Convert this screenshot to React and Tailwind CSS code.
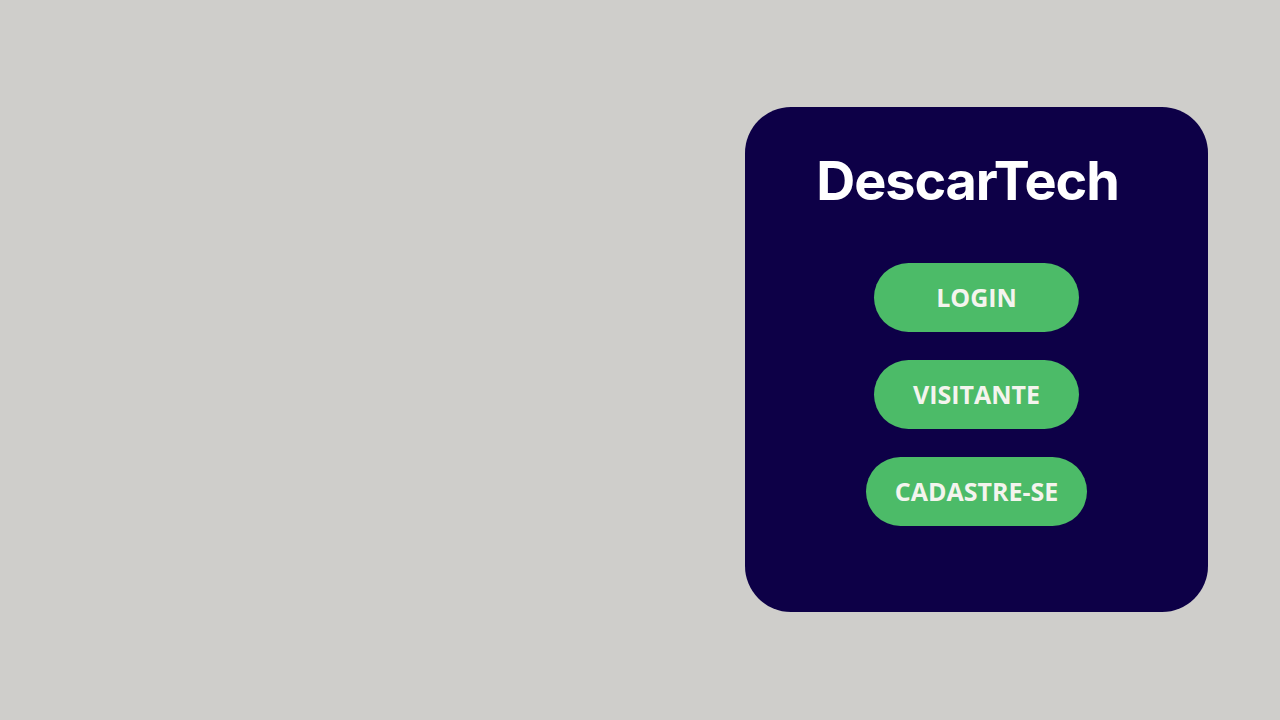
export default function App() {
  const buttons = [
    { label: 'LOGIN', w: 'w-[205px]' },
    { label: 'VISITANTE', w: 'w-[205px]' },
    { label: 'CADASTRE-SE', w: 'w-[221px]' },
  ];

  return (
    <div className="w-[1280px] h-[720px] bg-[#cfcecb] flex justify-end pr-[72px] pt-[107px]">
      <div className="w-[463px] h-[505px] bg-[#0d0047] rounded-[46px] flex flex-col items-center">
        <h1 className="mt-[42px] mr-[18px] text-[54px] leading-[64px] font-bold text-white font-['Inter',sans-serif] tracking-[-1.1px]">
          DescarTech
        </h1>
        <div className="mt-[50px] flex flex-col items-center gap-[28px]">
          {buttons.map(b => (
            <button
              key={b.label}
              className={`${b.w} h-[69px] rounded-full bg-[#4cbb68] text-[#f4f4ee] text-[25px] font-bold font-['Open_Sans',sans-serif] flex items-center justify-center`}
            >
              {b.label}
            </button>
          ))}
        </div>
      </div>
    </div>
  );
}
